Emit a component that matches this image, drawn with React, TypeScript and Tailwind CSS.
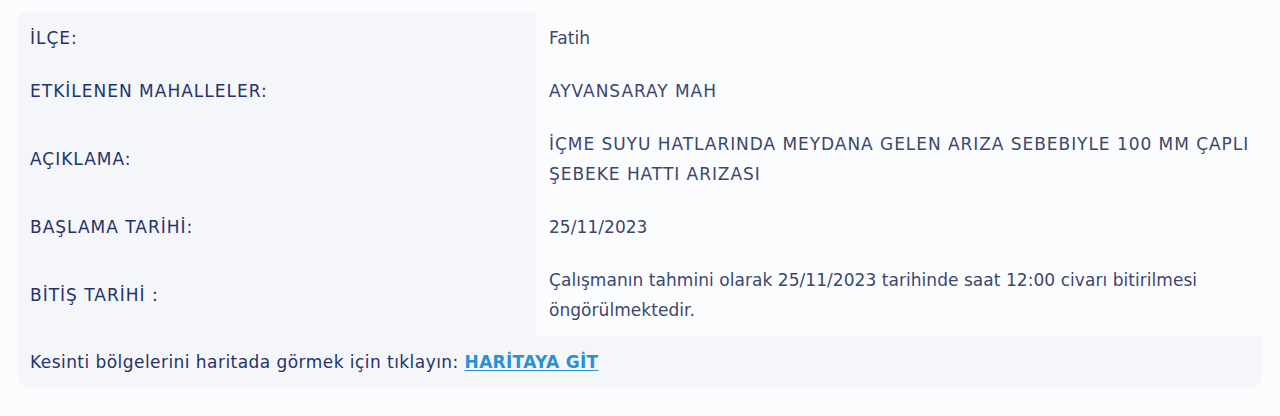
import React from "react";

const ROWS: { label: string; value: string; caps?: boolean }[] = [
  { label: "İLÇE:", value: "Fatih" },
  { label: "ETKİLENEN MAHALLELER:", value: "AYVANSARAY MAH", caps: true },
  {
    label: "AÇIKLAMA:",
    value: "İÇME SUYU HATLARINDA MEYDANA GELEN ARIZA SEBEBIYLE 100 MM ÇAPLI ŞEBEKE HATTI ARIZASI",
    caps: true,
  },
  { label: "BAŞLAMA TARİHİ:", value: "25/11/2023" },
  {
    label: "BİTİŞ TARİHİ :",
    value: "Çalışmanın tahmini olarak 25/11/2023 tarihinde saat 12:00 civarı bitirilmesi öngörülmektedir.",
  },
];

export default function App() {
  return (
    <div
      className="min-h-[416px] w-full bg-[#fbfcfe] pt-[11px] pl-[18px] pr-[18px]"
      style={{ fontFamily: "'DejaVu Sans', sans-serif" }}
    >
      <div className="w-[1244px] rounded-xl bg-[#f4f6fa] overflow-hidden">
        <div className="grid grid-cols-[518px_1fr]">
          {ROWS.map((row) => (
            <React.Fragment key={row.label}>
              {/* label cell */}
              <div className="flex items-center px-3 py-[11.5px] text-[17px] leading-[30px] tracking-[1px] text-[#243268]">
                {row.label}
              </div>
              {/* value cell */}
              <div
                className={`flex items-center bg-[#fbfcfe] pl-[13px] pr-2 py-[11.5px] text-[17px] leading-[30px] text-[#3c476b] ${
                  row.caps ? "tracking-[0.95px]" : "tracking-[0.05px]"
                }`}
              >
                {row.value}
              </div>
            </React.Fragment>
          ))}
        </div>
        <div className="px-3 py-[11px] text-[17px] leading-[30px] tracking-[0.45px] text-[#243268]">
          Kesinti bölgelerini haritada görmek için tıklayın:{" "}
          <a href="#" className="font-bold tracking-[0.3px] text-[#2a90d4] underline underline-offset-2">
            HARİTAYA GİT
          </a>
        </div>
      </div>
    </div>
  );
}
